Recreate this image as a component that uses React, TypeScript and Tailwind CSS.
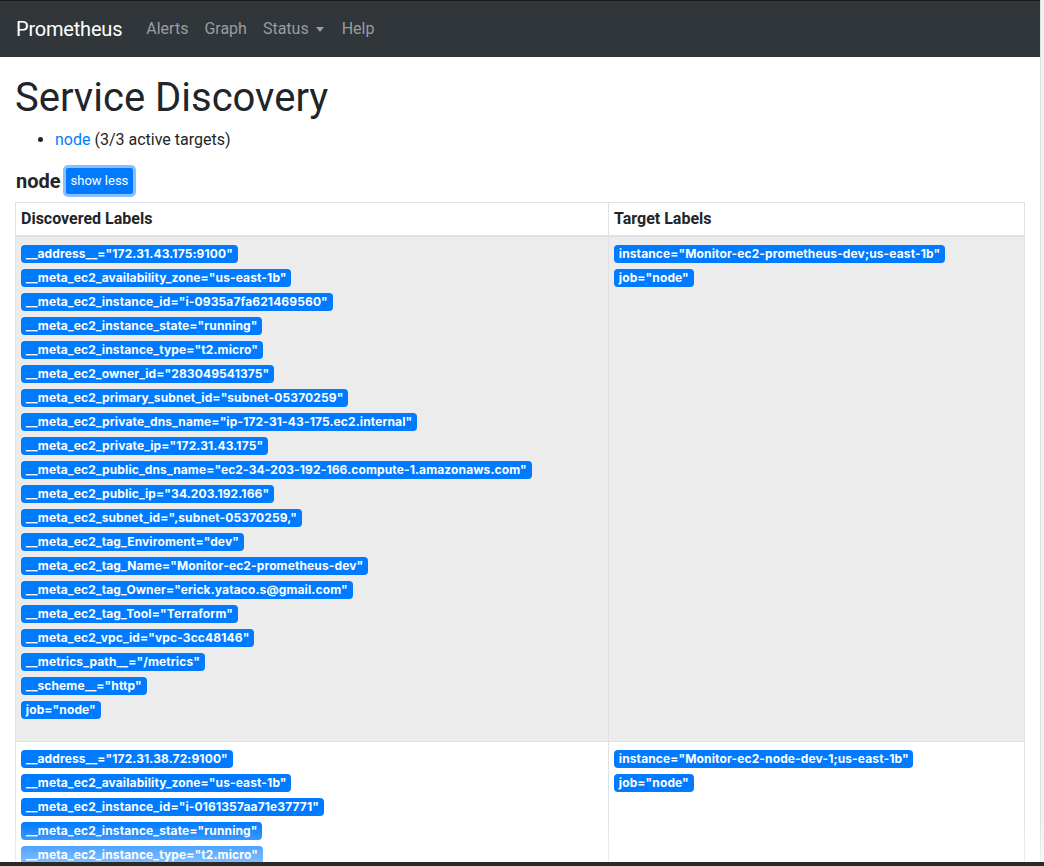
import React from "react";

const font = { fontFamily: "Roboto, 'Noto Sans', 'Liberation Sans', sans-serif" };
const badgeFont = { fontFamily: "Inter, 'Noto Sans', 'Liberation Sans', sans-serif" };

const group1 = [
  '__address__="172.31.43.175:9100"',
  '__meta_ec2_availability_zone="us-east-1b"',
  '__meta_ec2_instance_id="i-0935a7fa621469560"',
  '__meta_ec2_instance_state="running"',
  '__meta_ec2_instance_type="t2.micro"',
  '__meta_ec2_owner_id="283049541375"',
  '__meta_ec2_primary_subnet_id="subnet-05370259"',
  '__meta_ec2_private_dns_name="ip-172-31-43-175.ec2.internal"',
  '__meta_ec2_private_ip="172.31.43.175"',
  '__meta_ec2_public_dns_name="ec2-34-203-192-166.compute-1.amazonaws.com"',
  '__meta_ec2_public_ip="34.203.192.166"',
  '__meta_ec2_subnet_id=",subnet-05370259,"',
  '__meta_ec2_tag_Enviroment="dev"',
  '__meta_ec2_tag_Name="Monitor-ec2-prometheus-dev"',
  '__meta_ec2_tag_Owner="erick.yataco.s@gmail.com"',
  '__meta_ec2_tag_Tool="Terraform"',
  '__meta_ec2_vpc_id="vpc-3cc48146"',
  '__metrics_path__="/metrics"',
  '__scheme__="http"',
  'job="node"',
];
const target1 = ['instance="Monitor-ec2-prometheus-dev;us-east-1b"', 'job="node"'];

const group2 = [
  '__address__="172.31.38.72:9100"',
  '__meta_ec2_availability_zone="us-east-1b"',
  '__meta_ec2_instance_id="i-0161357aa71e37771"',
  '__meta_ec2_instance_state="running"',
  '__meta_ec2_instance_type="t2.micro"',
  '__meta_ec2_owner_id="283049541375"',
];
const target2 = ['instance="Monitor-ec2-node-dev-1;us-east-1b"', 'job="node"'];

function Badges({ items }: { items: string[] }) {
  return (
    <div className="pb-[19px]" style={badgeFont}>
      {items.map((t, i) => (
        <div key={i} className="h-6 flex items-center">
          <span className="inline-block bg-[#007bff] text-white text-[12px] font-bold leading-none tracking-[0.01em] px-[4.8px] py-[3px] rounded-[4px] whitespace-nowrap">
            {t}
          </span>
        </div>
      ))}
    </div>
  );
}

export default function App() {
  return (
    <div className="relative w-[1044px] h-[866px] overflow-hidden bg-white flex text-[#212529]" style={font}>
      <div className="w-[1040px] shrink-0">
        <nav className="border-t border-[#1a1a1a] bg-[#31363b] h-[57px] px-4 flex items-center">
          <span className="text-white text-[20px] leading-[30px] mr-4 tracking-[-0.01em]">Prometheus</span>
          <span className="text-[#9a9da0] text-[16px] px-2">Alerts</span>
          <span className="text-[#9a9da0] text-[16px] px-2">Graph</span>
          <span className="text-[#9a9da0] text-[16px] pl-2 pr-[10px] flex items-center">
            Status
            <span className="ml-[7px] w-0 h-0 border-t-[5px] border-t-[#9a9da0] border-x-[4.5px] border-x-transparent"></span>
          </span>
          <span className="text-[#9a9da0] text-[16px] px-2">Help</span>
        </nav>
        <div className="px-[15px]">
          <h1 className="text-[40px] leading-[48px] font-normal mt-[17px] mb-[6px]">Service Discovery</h1>
          <ul className="list-disc pl-10 mb-4 text-[16px] leading-6">
            <li>
              <span className="text-[#007bff]">node</span> (3/3 active targets)
            </li>
          </ul>
          <div className="flex items-center gap-[4px] mb-[8px]">
            <span className="text-[20px] font-bold leading-6 ml-px">node</span>
            <span className="ml-[1px] inline-flex items-center justify-center h-[26px] px-[5px] bg-[#007bff] text-white text-[13px] rounded-[2px] shadow-[0_0_0_3px_rgba(100,170,255,0.75)]">
              show less
            </span>
          </div>
          <table className="w-[1010px] border-collapse border border-[#dee2e6] text-[16px]">
            <thead>
              <tr>
                <th className="w-[593px] text-left font-bold px-[5px] py-[4px] leading-6 border border-[#dee2e6] border-b-2">
                  Discovered Labels
                </th>
                <th className="text-left font-bold px-[5px] py-[4px] leading-6 border border-[#dee2e6] border-b-2">
                  Target Labels
                </th>
              </tr>
            </thead>
            <tbody>
              <tr className="bg-[#ececec]">
                <td className="align-top px-[5px] pt-[4.8px] border border-[#dee2e6]">
                  <Badges items={group1} />
                </td>
                <td className="align-top px-[5px] pt-[4.8px] border border-[#dee2e6]">
                  <Badges items={target1} />
                </td>
              </tr>
              <tr>
                <td className="align-top px-[5px] pt-[4.8px] border border-[#dee2e6]">
                  <Badges items={group2} />
                </td>
                <td className="align-top px-[5px] pt-[4.8px] border border-[#dee2e6]">
                  <Badges items={target2} />
                </td>
              </tr>
            </tbody>
          </table>
        </div>
      </div>
      <div className="w-[4px] shrink-0 bg-[#f2f2f2] border-l border-[#dedede]"></div>
      <div className="absolute left-0 right-0 bottom-[4px] h-[40px] bg-gradient-to-b from-transparent to-white/50 pointer-events-none"></div>
      <div className="absolute left-0 right-0 bottom-0 h-[4px] bg-[#2a2a2a]"></div>
    </div>
  );
}
